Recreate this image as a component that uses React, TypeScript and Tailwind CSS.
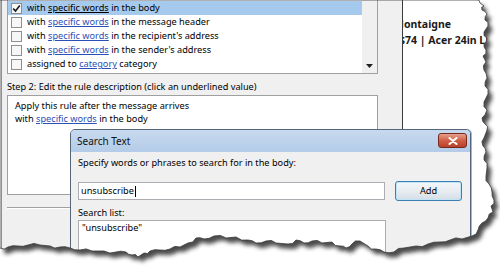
import React from "react";

type Pt = [number, number];

// Rough outline of the torn paper (top-left is the untouched corner).
const EDGE: Pt[] = [
  [476, 0], [480, 3], [484, 6], [482, 10], [487, 14], [485, 20], [488, 26],
  [484, 32], [487, 38], [484, 44], [486, 50], [483, 56], [486, 62], [484, 70],
  [487, 78], [485, 86], [488, 94], [484, 102], [487, 110], [482, 118],
  [485, 124], [487, 130], [484, 138], [483, 146], [486, 152], [484, 160],
  [487, 168], [486, 176], [489, 184], [492, 192], [494, 200], [491, 206],
  [493, 212], [488, 218], [482, 223], [478, 230], [472, 236], [462, 239],
  [450, 240], [440, 242], [428, 244], [416, 246], [404, 248], [394, 252],
  [384, 252], [376, 249], [368, 246], [360, 241], [352, 244], [346, 248],
  [340, 246], [332, 242], [322, 243], [312, 241], [304, 243], [296, 240],
  [288, 244], [276, 243], [266, 241], [256, 243], [248, 240], [236, 237],
  [226, 238], [214, 236], [204, 239], [196, 238], [188, 243], [180, 247],
  [170, 249], [160, 250], [150, 251], [144, 253], [138, 257], [132, 255],
  [126, 252], [116, 252], [104, 251], [92, 251], [80, 250], [70, 248],
  [60, 247], [50, 246], [40, 245], [28, 245], [18, 246], [8, 247], [0, 248],
];

// Add small jags between the key points so the edge looks ripped.
function jag(points: Pt[]): Pt[] {
  const out: Pt[] = [];
  for (let i = 0; i < points.length - 1; i++) {
    const [x1, y1] = points[i];
    const [x2, y2] = points[i + 1];
    const dx = x2 - x1;
    const dy = y2 - y1;
    const len = Math.hypot(dx, dy) || 1;
    const s = (((i * 7) % 5) - 2) * 0.8;
    out.push([x1, y1]);
    out.push([x1 + dx * 0.5 - (dy / len) * s, y1 + dy * 0.5 + (dx / len) * s]);
  }
  out.push(points[points.length - 1]);
  return out;
}

const paper =
  "M0 0 " + jag(EDGE).map(([x, y]) => `L${x.toFixed(1)} ${y.toFixed(1)}`).join(" ") + " Z";

function TornEdge() {
  const outside = `M-20 -20H520V290H-20Z ${paper}`;
  return (
    <svg
      className="pointer-events-none absolute inset-0"
      width={500}
      height={266}
      viewBox="0 0 500 266"
    >
      <defs>
        <clipPath id="outside">
          <path d={outside} clipRule="evenodd" />
        </clipPath>
        <filter id="blur" x="-10%" y="-10%" width="120%" height="120%">
          <feGaussianBlur stdDeviation="2.2" />
        </filter>
      </defs>
      <path d={outside} fill="#fff" fillRule="evenodd" />
      <g clipPath="url(#outside)">
        <path d={paper} transform="translate(4 5)" fill="#2a2a2a" opacity={0.85} filter="url(#blur)" />
      </g>
      <path d={paper} fill="none" stroke="#3a3a3a" strokeWidth={0.8} />
    </svg>
  );
}

const LINK = "text-[#2c4fb8] underline underline-offset-[1px]";

function Checkbox({ checked }: { checked?: boolean }) {
  return (
    <span className="flex h-[11px] w-[11px] shrink-0 items-center justify-center border border-[#8e8f8f] bg-[#f7f7f7]">
      {checked && (
        <svg width="9" height="9" viewBox="0 0 9 9">
          <path d="M1.2 4.6 L3.5 7 L7.8 1.6" fill="none" stroke="#1a1a1a" strokeWidth="1.6" />
        </svg>
      )}
    </span>
  );
}

function RuleRow({
  checked,
  selected,
  children,
}: {
  checked?: boolean;
  selected?: boolean;
  children: React.ReactNode;
}) {
  return (
    <div
      className={`flex h-[14px] items-center gap-[5px] pl-[3px] ${selected ? "bg-[#a6caee]" : ""}`}
    >
      <Checkbox checked={checked} />
      <span className="whitespace-nowrap leading-none">{children}</span>
    </div>
  );
}

function RulesDialog() {
  return (
    <div className="ml-px flex w-[402px] shrink-0 flex-col border-l border-r border-l-[#8e8f8f] border-r-[#3c3c3c] bg-[#f0f0f0] pl-[5px]">
      {/* Step 1 list of conditions */}
      <div className="-mt-px flex h-[75px] w-[371px] border border-[#a0a0a0] bg-white">
        <div className="flex flex-1 flex-col pt-px">
          <RuleRow checked selected>
            with <span className="underline underline-offset-[1px]">specific words</span> in the body
          </RuleRow>
          <RuleRow>
            with <span className={LINK}>specific words</span> in the message header
          </RuleRow>
          <RuleRow>
            with <span className={LINK}>specific words</span> in the recipient's address
          </RuleRow>
          <RuleRow>
            with <span className={LINK}>specific words</span> in the sender's address
          </RuleRow>
          <RuleRow>
            assigned to <span className={LINK}>category</span> category
          </RuleRow>
        </div>
        <div className="flex w-[15px] flex-col justify-end bg-[#f0f0f0]">
          <div className="mb-px flex h-[12px] items-center justify-center">
            <svg width="7" height="4" viewBox="0 0 7 4">
              <path d="M0 0H7L3.5 4Z" fill="#202020" />
            </svg>
          </div>
        </div>
      </div>

      <div className="mt-[5px] h-[16px] leading-[16px] whitespace-nowrap">
        Step 2: Edit the rule description (click an underlined value)
      </div>

      <div className="h-[100px] w-[371px] border border-[#a0a0a0] bg-white px-[7px] pt-[3px] leading-[13px]">
        <div>Apply this rule after the message arrives</div>
        <div>
          with <span className={LINK}>specific words</span> in the body
        </div>
      </div>

      <div className="mt-[12px] h-[2px] w-[371px] border-t border-t-[#a0a0a0] border-b border-b-white" />
    </div>
  );
}

function InfoPane() {
  return (
    <div className="flex-1 overflow-hidden bg-white pt-[16px] font-bold text-[10.5px] leading-[16px] text-[#1a1a1a]">
      <div className="-ml-[9px] whitespace-nowrap">Montaigne</div>
      <div className="-ml-[4px] whitespace-nowrap">$74 | Acer 24in LED Monitor</div>
    </div>
  );
}

function SearchTextDialog() {
  return (
    <div className="absolute left-[70px] top-[129px] flex h-[140px] w-[401px] flex-col rounded-t-[5px] border border-[#55657a] bg-[#f0f0f0] shadow-[1px_0_0_#9bb6d6]">
      <div className="relative flex h-[22px] shrink-0 items-center rounded-t-[4px] bg-gradient-to-b from-[#c7d9ee] to-[#b4cce8] pl-[6px] text-[10px] text-[#111]">
        Search Text
        <div className="absolute right-[3px] top-[3px] flex h-[15px] w-[29px] items-center justify-center rounded-[3px] border border-[#7a2a1c] bg-gradient-to-b from-[#e5a08f] via-[#cf5f45] to-[#b8412a]">
          <svg width="10" height="8" viewBox="0 0 10 8">
            <path d="M1.5 1 L8.5 7 M8.5 1 L1.5 7" stroke="#fff" strokeWidth="2" strokeLinecap="round" />
          </svg>
        </div>
      </div>
      <div className="flex flex-col pl-[7px] pt-[5px]">
        <div className="h-[12px] leading-[12px]">Specify words or phrases to search for in the body:</div>
        <div className="mt-[12px] flex items-center">
          <div className="flex h-[18px] w-[307px] items-center border border-[#abadb3] bg-white px-[2px]">
            unsubscribe
            <span className="ml-px h-[11px] w-px bg-black" />
          </div>
          <div className="ml-[10px] flex h-[20px] w-[67px] items-center justify-center rounded-[3px] border border-[#3c7fb1] bg-gradient-to-b from-[#f4f7fa] via-[#e8edf2] to-[#d5dde5] shadow-[inset_0_0_0_1px_#bfe4f8]">
            Add
          </div>
        </div>
        <div className="mt-[5px] h-[13px] leading-[13px]">Search list:</div>
        <div className="mt-px h-[50px] w-[308px] border border-[#abadb3] bg-white px-[3px] leading-[14px]">
          "unsubscribe"
        </div>
      </div>
    </div>
  );
}

export default function App() {
  return (
    <div className="relative h-[266px] w-[500px] overflow-hidden bg-white font-['Noto_Sans',sans-serif] text-[9.2px] text-black">
      <div className="flex h-full">
        <RulesDialog />
        <InfoPane />
      </div>
      <SearchTextDialog />
      <TornEdge />
    </div>
  );
}
